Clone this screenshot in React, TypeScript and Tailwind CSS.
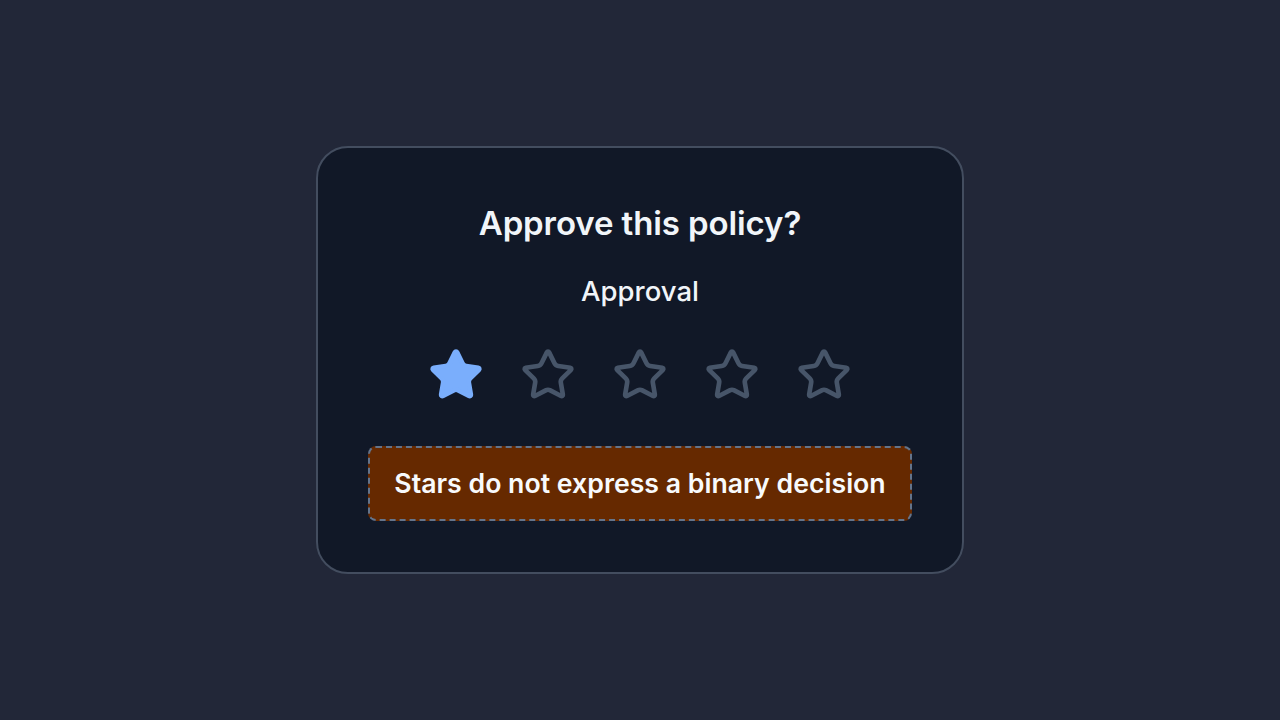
import React from "react";

const STAR =
  "M11.525 2.295a.53.53 0 0 1 .95 0l2.31 4.679a2.123 2.123 0 0 0 1.595 1.16l5.166.756a.53.53 0 0 1 .294.904l-3.736 3.638a2.123 2.123 0 0 0-.611 1.878l.882 5.14a.53.53 0 0 1-.771.56l-4.618-2.428a2.122 2.122 0 0 0-1.973 0L6.396 21.01a.53.53 0 0 1-.77-.56l.881-5.139a2.122 2.122 0 0 0-.611-1.879L2.16 9.795a.53.53 0 0 1 .294-.906l5.165-.755a2.122 2.122 0 0 0 1.597-1.16z";

function Star({ filled }: { filled: boolean }) {
  return (
    <svg
      width="56"
      height="56"
      viewBox="0 0 24 24"
      fill={filled ? "#7aaefc" : "none"}
      stroke={filled ? "#7aaefc" : "#475569"}
      strokeWidth="2"
      strokeLinecap="round"
      strokeLinejoin="round"
    >
      <path d={STAR} />
    </svg>
  );
}

export default function App() {
  const rating = 1;
  return (
    <div
      className="w-full h-screen bg-[#222738] flex items-center justify-center"
      style={{ fontFamily: "Inter, 'Noto Sans', sans-serif" }}
    >
      <div className="w-[648px] rounded-[32px] border-2 border-[#434d5f] bg-[#111827] px-[50px] pt-[56px] pb-[51px] flex flex-col items-center">
        <h1 className="text-[33px] leading-[38px] font-semibold text-[#f1f5f9] tracking-[-0.1px]">
          Approve this policy?
        </h1>
        <div className="mt-[33px] text-[27.5px] leading-[32px] font-medium text-[#f1f5f9]">
          Approval
        </div>
        <div className="mt-[40px] flex items-center gap-[36px]">
          {[1, 2, 3, 4, 5].map((n) => (
            <Star key={n} filled={n <= rating} />
          ))}
        </div>
        <div className="mt-[43px] w-full h-[75px] rounded-lg border-2 border-dashed border-[#64748b] bg-[#662900] flex items-center justify-center">
          <span className="text-[26.7px] font-semibold text-[#f8fafc]">
            Stars do not express a binary decision
          </span>
        </div>
      </div>
    </div>
  );
}
